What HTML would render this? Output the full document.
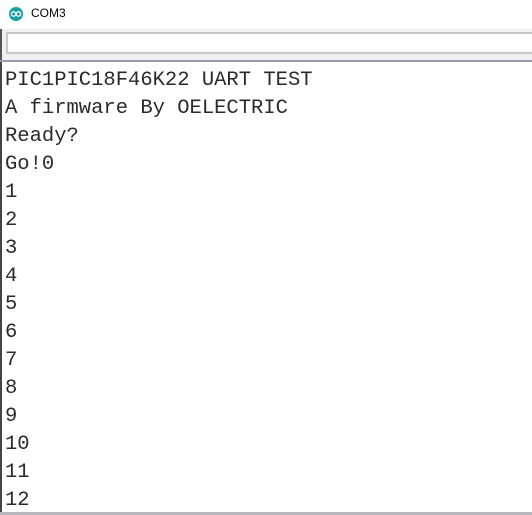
<!DOCTYPE html>
<html><head><style>
html,body{margin:0;padding:0;background:#fff;width:532px;height:515px;overflow:hidden;position:relative;font-family:"Liberation Sans",sans-serif}
.title{position:absolute;left:0;top:0;width:532px;height:29px;background:#fff}
.icon{position:absolute;left:9px;top:7px;width:14px;height:14px;border-radius:50%;background:#17a1a5}
.ttxt{position:absolute;left:31px;top:6px;font-size:12px;color:#000}
.bar{position:absolute;left:0;top:29px;width:532px;height:32px;background:#f0f0f0;border-left:2px solid #555;box-sizing:border-box}
.inp{position:absolute;left:4px;top:3px;width:540px;height:22px;background:#fff;border:2px solid #c9c9cc;box-sizing:border-box}
.sep{position:absolute;left:0;top:60px;width:532px;height:2px;background:#9a9aa0}
.area{position:absolute;left:0;top:62px;width:532px;height:451px;border-left:2px solid #444;box-sizing:border-box;background:#fff}
.bot{position:absolute;left:0;top:512px;width:532px;height:3px;background:#b8b8bc}
pre{margin:0;position:absolute;left:3px;top:5px;font-family:"Liberation Mono",monospace;font-size:20.5px;line-height:28px;color:#2a2a2a}
</style></head><body>
<div class="title"><div class="icon"><svg width="14" height="14" viewBox="0 0 14 14"><circle cx="4.6" cy="7" r="2.2" fill="none" stroke="#fff" stroke-width="1.3"/><circle cx="9.4" cy="7" r="2.2" fill="none" stroke="#fff" stroke-width="1.3"/></svg></div><div class="ttxt">COM3</div></div>
<div class="bar"><div class="inp"></div></div>
<div class="sep"></div>
<div class="area"><pre>PIC1PIC18F46K22 UART TEST
A firmware By OELECTRIC
Ready?
Go!0
1
2
3
4
5
6
7
8
9
10
11
12</pre></div>
<div class="bot"></div>
</body></html>
